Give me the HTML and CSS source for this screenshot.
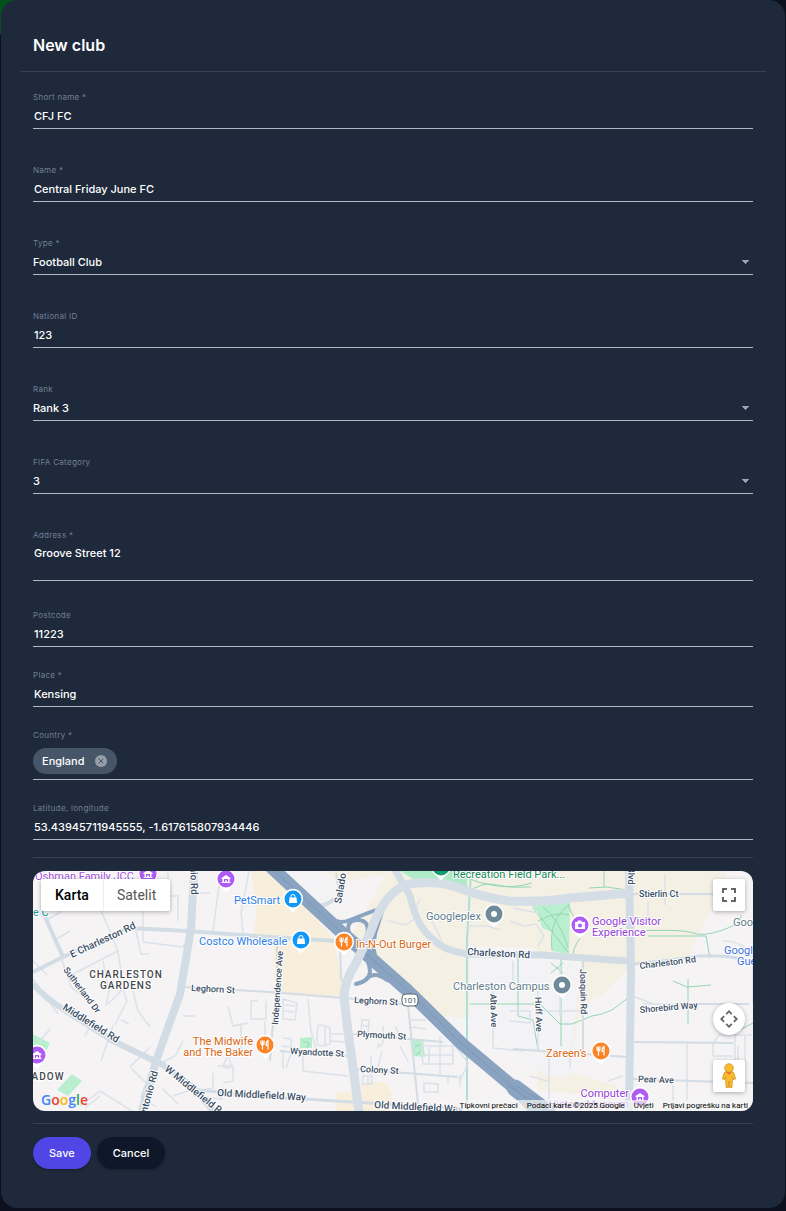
FILE: index.html
```html
<!DOCTYPE html>
<html lang="en">
<head>
  <meta charset="UTF-8" />
  <meta name="viewport" content="width=device-width, initial-scale=1.0" />
  <title>New club</title>
  <link rel="stylesheet" href="styles.css">
</head>
<body>
  <div class="backdrop-banner"></div>
  <main class="dialog">
    <header class="dialog-header">
      <h1>New club</h1>
    </header>

    <form class="club-form">
      <div class="fields">
        <div class="field">
          <label for="shortName">Short name *</label>
          <input type="text" id="shortName" value="CFJ FC">
        </div>
        <div class="field">
          <label for="name">Name *</label>
          <input type="text" id="name" value="Central Friday June FC">
        </div>
        <div class="field">
          <label for="type">Type *</label>
          <select id="type"><option>Football Club</option></select>
        </div>
        <div class="field">
          <label for="nationalId">National ID</label>
          <input type="text" id="nationalId" value="123">
        </div>
        <div class="field">
          <label for="rank">Rank</label>
          <select id="rank"><option>Rank 3</option></select>
        </div>
        <div class="field">
          <label for="category">FIFA Category</label>
          <select id="category"><option>3</option></select>
        </div>
        <div class="field">
          <label for="address">Address *</label>
          <textarea id="address">Groove Street 12</textarea>
        </div>
      </div>

      <div class="fields compact">
        <div class="field">
          <label for="postcode">Postcode</label>
          <input type="text" id="postcode" value="11223">
        </div>
        <div class="field">
          <label for="place">Place *</label>
          <input type="text" id="place" value="Kensing">
        </div>
        <div class="field">
          <label for="country">Country *</label>
          <div class="chips">
            <span class="chip">England
              <button type="button" class="chip-remove" aria-label="Remove England">
                <svg width="12" height="12" viewBox="0 0 12 12"><circle cx="6" cy="6" r="6"/><path d="M3.7 3.7l4.6 4.6M8.3 3.7L3.7 8.3"/></svg>
              </button>
            </span>
            <input type="text" id="country">
          </div>
        </div>
        <div class="field">
          <label for="latlng">Latitude, longitude</label>
          <input type="text" id="latlng" value="53.43945711945555, -1.617615807934446">
        </div>
      </div>

      <div class="map">
        <svg class="map-canvas" viewBox="0 0 720 240" preserveAspectRatio="xMidYMid slice">
          <defs>
            <g id="pin">
              <path d="M0 13.500L-5 8.500A10 10 0 1 1 5 8.500Z" fill="#fff"/>
              <circle r="8.500"/>
            </g>
            <path id="fork" d="M-4-4.500v3q0 1.500 1.500 1.500v4.500M-2.500-4.500v4M-1-4.500v3q0 1.500-1.500 1.500M3 4.500v-9q-2 1-2 5h2" fill="none" stroke="#fff" stroke-width="1.200"/>
            <g id="bag"><path d="M-3.500-1.500h7l.5 5.500h-8z" fill="#fff"/><path d="M-2-1v-1.500a2 2 0 0 1 4 0V-1" fill="none" stroke="#fff"/></g>
            <path id="museum" d="M-4.500-1L0-4l4.500 3v1h-1v3h1v1h-9v-1h1V0h-1zM-2 0v3h1V1l1 1 1-1v2h1V0z" fill="#fff" fill-rule="evenodd"/>
          </defs>

          <rect width="720" height="240" fill="#f5f3f4"/>

          <g fill="#f5f0e4">
            <path fill="#f7efdc" d="M218 0h20l34 35 28 32 12 52-2 9-68-5-2-55-20-4 4-22z"/>
            <path d="M300 0h394l-12 30-28 60-54 4-30 29-11 5-15 23-7 50 48 14v12l-80-8-2-142-66-2v72l-28-2-42-40-22-20-26-22 35-60-50 10-22-30z"/>
            <path fill="#f7efdc" d="M303 222l22-3 8-8h20l6 12-2 17h-54z"/>
            <path fill="#f3f3f5" d="M270 5h32l-10 30q8 14 20 10l-10 15-30-28z"/>
            <path fill="#f3f3f5" d="M437 86h112l-8 70-4 50h-20l-80-55z"/>
          </g>

          <g fill="#b9efcf">
            <path fill="#aeebc6" d="M367 0h67v22q-18-6-34-9l-20-5z"/>
            <path d="M498 34l39-4-1 53-17-3v-19l-10-4-4-16z"/>
            <path d="M0 163l17 9-4 8-13-5zM39 203l10 7-14 15-11-6zM267 167l12-1v11h-12zM380 169l10-1 2 18-12-1z"/>
          </g>

          <!-- footpaths and the creek -->
          <g fill="none" stroke="#93d6b4" stroke-width="1">
            <path d="M500 37l35 44M537 33q-22 16-18 46M510 36q16 12 25 40M505 50q18-10 31-6M535 34q8 20 20 24-14 14-15 25M434 22q15-12 30-8t35-2M432 6q25 12 66 10M556 17l18-1 20 3M571 0v16M600 60q50-2 60 2t30-3 18-15M615 65h58l4 22M485 85v60l15 4 5 30M437 133h70l20 20h12l20-8q10-1 20-6l16-12M528 85v90M518 92l12 10M530 92l-12 10M640 110l14 6 24-2M655 108v45M705 160l15-8M382 176q4-4 6 0t-5 8M270 170l6 2-2 5"/>
          </g>
          <path d="M438 0l-4 70v158l1 12" fill="none" stroke="#addeda" stroke-width="2"/>

          <!-- minor streets -->
          <g fill="none" stroke="#dbe2e9" stroke-width="1.500">
            <path d="M60 20l25 60 4 28M89 115l5 15-12 24M110 40v31l40 5M40 103l45-23M103 60l5 23h8M14 49l23-14M20 70l17-10M28 86l10 30 15 12M0 108l25 35M0 90l14 14M70 90l6 30-3 15M180 60l8-60M210 62l-2-20 8-42M135 0v25h10v25M165 22h12M2 40l10 6-4-12M195 135l5 20 15-3M225 130h-7v18h15v-18M232 150v30M208 152v30M190 170h30M185 195h15v15l-10 2"/>
            <path d="M67 225l-15 12M67 220l40 25M67 220l-20 15M98 197l15 15-5 14 15 10M130 218l15 15M80 155l-12 35M60 150l-8 15M17 158l-10 12M88 149l8 4M122 195l20-10 8-15M150 145h12M100 120l5 20 12 16M75 133l15-15M117 176l-20 20M140 225l15-5 5-8M195 185q-8 12-1 12t1-12M160 225l30 3M180 202v15l-18 3"/>
            <path d="M250 128l14 4-2 17-12-1zM252 134l10 1M251 140l10 1M275 128l3 32 6 20M250 167l8 1v8l-9-1M285 155q-3 20 2 20t10-2V157q-10-5-12-2M292 156v18M298 163h15M298 170l14 1M270 180v20l45 5M258 182l-5 15M250 180v18M329 149h7l-1 13h-7zM330 155h7M349 180l-5 20M338 185v20M350 155v17q-7 8-4 0M362 155l7 15M367 175l8 15M330 205h9v8h-10zM335 205v9M388 175h32v18h-30zM396 176v18M407 165v38M390 184h30M420 172l15 20-8 18M391 212l14 1v8h-14zM427 204v12M415 204v8M378 149h15M378 156l15 2"/>
            <path d="M477 50l14 5 12-2 8 12-6 10M480 37l25 5M460 120v57l30 3M477 140h20v12l-20-2M505 115v64M527 95v50M516 180v60M537 178v20M505 140h42M497 205l20 6M610 133h60M654 171v69M640 214v26M680 185v-13l6-8h34M702 162v60M712 165v30M680 185h20M705 175v40M720 132v-37M615 30v20M632 4v30M575 210l15-5M600 125l20 8M480 90v20M690 70q20 0 30 16M435 55h20l12 4M388 28q-8 8-2 20t15 24M355 50l18 4 8-6M399 50l10 20M687 195h20v15"/>
          </g>

          <!-- named streets -->
          <g fill="none" stroke="#d2dce5" stroke-linejoin="round">
            <g stroke-width="2">
              <path d="M152 116l85 5 75 6 65 7M244 66v52l-4 34-3 38M247 180l68 5M317 163l93 8M320 198l105 8M375 134l10 99M550 90v90M480 178l115 8M600 171l100 1M600 208l120 4M664 133h52M158 76l-8-1M600 23h90M307 70l1 38 6 8M303 2l4 25"/>
            </g>
            <path stroke-width="3" d="M600 93q40-4 65-8 40-2 55 8M164 219l73 7 83 5 104 6"/>
            <path stroke-width="4" d="M0 101l30-15 65-29 59 3 83 6 67 4M12 46l18 40M240 0l34 30q14 10 27-2"/>
            <path stroke-width="6" d="M0 113q12 14 30 25l50 32 50 24 30 22 20 24"/>
            <path stroke-width="7" d="M361-3l16 28q7 32 24 44 12 12 36 14l73 1 84 6"/>
            <path stroke-width="8" d="M161 0l-3 58-11 65-24 67-14 50M596 0l2 100-2 140"/>
          </g>

          <!-- freeway with its ramps -->
          <g fill="none" stroke="#8aa3c0" stroke-linecap="round">
            <path stroke-width="4" d="M290 40l11 9q6 4 16 0t34-13M351 34l-9 29q-4 18 3 27l16 16M318 66c-6-11-2-17 7-17s12 7 8 18M327 80q10 10 10 20t-14 13M334 107q8-7 20 2l10 3"/>
            <path stroke-width="13" d="M238-4l69 64 67 59 55 54 56 47 18 20"/>
            <path stroke-width="17" d="M482 217l32 24"/>
            <path stroke="#7c96b7" stroke-width="1" d="M237-4l70 64 67 59 55 54 56 47 20 20M475 215l40 24M484 215l38 24"/>
          </g>
          <path d="M326 243q-4-35-11-82l-4-35q0-15 12-34l15-32q8-24 20-36 10-11 26-12 26-3 53 9 18 6 40 9 40 1 60-3l60-5" fill="none" stroke="#d5dee7" stroke-width="9"/>

          <g class="street">
            <text transform="translate(39 87) rotate(-25)">E Charleston Rd</text>
            <text transform="translate(30 99) rotate(53)" class="small">Sutherland Dr</text>
            <text transform="translate(29 138) rotate(32)">Middlefield Rd</text>
            <text transform="translate(131 199) rotate(39)">W Middlefield Rd</text>
            <text transform="translate(114 242) rotate(-75)">ntonio Rd</text>
            <text transform="translate(157 -10) rotate(88)">onio Rd</text>
            <text transform="translate(158 120) rotate(3)" class="small">Leghorn St</text>
            <text transform="translate(245 154) rotate(-86)" class="small">Independence Ave</text>
            <text transform="translate(308 33) rotate(-80)">Salado Dr</text>
            <text transform="translate(321 132) rotate(3)" class="small">Leghorn St</text>
            <text transform="translate(324 166) rotate(3)" class="small">Plymouth St</text>
            <text transform="translate(257 183) rotate(3)" class="small">Wyandotte St</text>
            <text transform="translate(327 201) rotate(3)" class="small">Colony St</text>
            <text transform="translate(184 225) rotate(3)">Old Middlefield Way</text>
            <text transform="translate(341 237) rotate(3)">Old Middlefield Way</text>
            <text transform="translate(434 84) rotate(3)">Charleston Rd</text>
            <text transform="translate(457 123) rotate(88)" class="small">Alta Ave</text>
            <text transform="translate(502 126) rotate(88)" class="small">Huff Ave</text>
            <text transform="translate(547 98) rotate(89)" class="small">Joaquin Rd</text>
            <text transform="translate(595 -4) rotate(90)" class="small">Blvd</text>
            <text x="606" y="26" class="small">Stierlin Ct</text>
            <text transform="translate(607 98) rotate(-7)" class="small">Charleston Rd</text>
            <text transform="translate(607 142) rotate(-5)" class="small">Shorebird Way</text>
            <text transform="translate(605 211) rotate(2)" class="small">Pear Ave</text>
          </g>

          <g class="area">
            <text x="93" y="107">CHARLESTON</text>
            <text x="93" y="118">GARDENS</text>
            <text x="15" y="209">ADOW</text>
          </g>

          <g class="place">
            <text x="2" y="9" fill="#a44fe0">Oshman Family JCC</text>
            <text x="0" y="45" fill="#179a9e">e C</text>
            <text x="201" y="33" fill="#2b7de9">PetSmart</text>
            <text x="166" y="74" fill="#2b7de9">Costco Wholesale</text>
            <text x="323" y="77" fill="#d9650f">In-N-Out Burger</text>
            <text x="420" y="7" fill="#188a59">Recreation Field Park...</text>
            <text x="393" y="49" fill="#607d8b">Googleplex</text>
            <text x="420" y="119" fill="#607d8b">Charleston Campus</text>
            <text x="559" y="54" fill="#9342d8">Google Visitor</text>
            <text x="559" y="65" fill="#9342d8">Experience</text>
            <text x="700" y="55" fill="#607d8b">Googleplex</text>
            <text x="691" y="83" fill="#3c6fe0">Google</text>
            <text x="704" y="94" fill="#3c6fe0">Guest</text>
            <text x="220" y="174" text-anchor="end" fill="#d9650f">The Midwife</text>
            <text x="220" y="185" text-anchor="end" fill="#d9650f">and The Baker</text>
            <text x="513" y="186" fill="#d9650f">Zareen's</text>
            <text x="596" y="226" text-anchor="end" fill="#9342d8">Computer</text>
            <text x="596" y="237" text-anchor="end" fill="#9342d8">History Museum</text>
          </g>

          <g fill="#1198f5">
            <g transform="translate(260 28)"><use href="#pin"/><use href="#bag"/></g>
            <g transform="translate(268 69)"><use href="#pin"/><use href="#bag"/></g>
          </g>
          <g fill="#fb8427">
            <g transform="translate(311 71)"><use href="#pin"/><use href="#fork"/></g>
            <g transform="translate(232 174)"><use href="#pin"/><use href="#fork"/></g>
            <g transform="translate(568 180)"><use href="#pin"/><use href="#fork"/></g>
          </g>
          <g fill="#af5cf7">
            <g transform="translate(115 3)"><use href="#pin"/><use href="#museum"/></g>
            <g transform="translate(193 8)"><use href="#pin"/><use href="#museum"/></g>
            <g transform="translate(4 184)"><use href="#pin"/><use href="#museum"/></g>
            <g transform="translate(607 226)"><use href="#pin"/><use href="#museum"/></g>
            <g transform="translate(547 54)"><use href="#pin"/><path d="M-5-3h2l1-1.500h3L2-3h3v7H-5z" fill="#fff"/><circle cy=".5" r="2"/></g>
          </g>
          <g fill="#6f8b99">
            <g transform="translate(461 43)"><use href="#pin"/><circle r="3" fill="#fff"/></g>
            <g transform="translate(529 114)"><use href="#pin"/><circle r="3" fill="#fff"/></g>
          </g>
          <g transform="translate(408 -4)" fill="#0f9d6b"><use href="#pin"/></g>

          <g transform="translate(377 129)">
            <rect x="-8" y="-6" width="16" height="12" rx="4" fill="#fff" stroke="#5b6570"/>
            <text class="shield" y="3">101</text>
          </g>
        </svg>

        <div class="map-types">
          <button type="button" class="active">Karta</button>
          <button type="button">Satelit</button>
        </div>

        <div class="map-controls">
          <button type="button" class="map-button" aria-label="Fullscreen">
            <svg width="14" height="14" viewBox="0 0 14 14"><path d="M1 5V1h4M9 1h4v4M13 9v4H9M5 13H1V9" fill="none" stroke="#666" stroke-width="2"/></svg>
          </button>
          <button type="button" class="map-button round" aria-label="Camera controls">
            <svg width="18" height="18" viewBox="0 0 18 18"><path d="M5.500 3.500L9 0l3.500 3.500-1.300 1.300L9 2.600 6.800 4.800zM5.500 14.500L9 18l3.500-3.500-1.300-1.300L9 15.400l-2.200-2.200zM3.500 5.500L0 9l3.500 3.500 1.300-1.300L2.600 9l2.200-2.200zM14.500 5.500L18 9l-3.500 3.500-1.300-1.300L15.400 9l-2.200-2.200z" fill="#666"/></svg>
          </button>
          <button type="button" class="map-button" aria-label="Street View">
            <svg width="16" height="26" viewBox="0 0 16 26"><g fill="#fbbc2c" stroke="#c98a1a" stroke-width=".7"><path d="M4 9q4-2 8 0 1.500 1 2.500 7l-2 .5L11.500 14 11 24.500H8.500L8 18l-.5 6.500H5L4.500 14l-1 2.500-2-.5Q2.500 10 4 9z"/><circle cx="8" cy="5" r="4.300"/></g><path d="M5 9h6l-3 3z" fill="#e8752c"/></svg>
          </button>
        </div>

        <div class="google"><span class="b">G</span><span class="r">o</span><span class="y">o</span><span class="b">g</span><span class="g">l</span><span class="r">e</span></div>
        <div class="map-footer">
          <a href="#">Tipkovni prečaci</a>
          <span>Podaci karte ©2025 Google</span>
          <a href="#">Uvjeti</a>
          <a href="#">Prijavi pogrešku na karti</a>
        </div>
      </div>

      <div class="actions">
        <button type="submit" class="btn primary">Save</button>
        <button type="button" class="btn">Cancel</button>
      </div>
    </form>
  </main>
</body>
</html>
```
FILE: styles.css
```css
* {
  box-sizing: border-box;
}
body {
  font-family: Inter, sans-serif;
  font-size: 11px;
  font-weight: 500;
  background-color: #0b111e;
  color: #fff;
  margin: 0;
  padding: 0 1px 2px;
}
button, input, select, textarea {
  font: inherit;
  color: inherit;
}
button {
  border: none;
  cursor: pointer;
}
.backdrop-banner {
  position: absolute;
  top: 0;
  left: 0;
  width: 20px;
  height: 34px;
  background-color: #04501b;
}
.dialog {
  position: relative;
  background-color: #1e293b;
  border-radius: 16px;
  padding: 20px 19px 39px;
}
.dialog-header {
  padding: 12px 13px 13px;
  border-bottom: 1px solid #364154;
}
h1 {
  margin: 0;
  font-size: 16px;
  line-height: 26px;
  font-weight: 600;
}
.club-form {
  padding: 19px 13px 0;
}
.fields {
  display: flex;
  flex-direction: column;
  gap: 35px;
}
.fields.compact {
  gap: 22px;
  margin-top: 28px;
  padding-bottom: 17px;
  border-bottom: 1px solid #364154;
}
.field {
  display: flex;
  flex-direction: column;
  border-bottom: 1px solid #b3bac4;
}
.field label {
  font-size: 8px;
  font-weight: 400;
  line-height: 12px;
  letter-spacing: 0.3px;
  color: #718096;
}
.field input, .field select, .field textarea {
  width: 100%;
  height: 25px;
  padding: 0 1px;
  border: none;
  border-radius: 0;
  outline: none;
  background: none;
  line-height: 16px;
}
.field select {
  appearance: none;
  padding: 0;
  background: linear-gradient(to bottom right, #94a3b8 50%, transparent 50%) right 3px center / 4px 4px no-repeat,
    linear-gradient(to bottom left, #94a3b8 50%, transparent 50%) right 7px center / 4px 4px no-repeat;
}
.field textarea {
  display: block;
  height: 39px;
  padding-top: 4px;
  resize: none;
}
.chips {
  display: flex;
  height: 38px;
  padding: 7px 0 5px;
}
.chip {
  display: flex;
  align-items: center;
  gap: 10px;
  padding: 0 10px 0 9px;
  border-radius: 13px;
  background-color: #475569;
}
.chip-remove {
  display: flex;
  padding: 0;
  background: none;
}
.chip-remove circle {
  fill: #959da8;
}
.chip-remove path {
  stroke: #475569;
  stroke-width: 1;
}
.chips input {
  flex: 1;
  width: auto;
}

/* map */
.map {
  position: relative;
  height: 240px;
  margin-top: 13px;
  border-radius: 12px;
  overflow: hidden;
  font-family: Roboto, sans-serif;
  font-weight: 400;
}
.map-canvas {
  display: block;
  width: 100%;
  height: 100%;
}
.map-canvas text {
  paint-order: stroke;
  stroke: #fff;
  stroke-width: 2px;
  stroke-linejoin: round;
}
.street text {
  font-size: 10px;
  font-weight: 500;
  fill: #3c4f66;
}
.street .small {
  font-size: 9px;
}
.area text {
  font-size: 10px;
  font-weight: 500;
  letter-spacing: 1px;
  text-anchor: middle;
  fill: #45484d;
}
.place text {
  font-size: 11px;
}
.map-canvas .shield {
  font-size: 8px;
  text-anchor: middle;
  fill: #4a5560;
  stroke: none;
}
.map-types {
  position: absolute;
  top: 8px;
  left: 8px;
  display: flex;
  background-color: #fff;
  border-radius: 2px;
  box-shadow: 0 1px 4px rgba(0, 0, 0, 0.3);
}
.map-types button {
  height: 32px;
  padding: 0 14px;
  background: none;
  font-size: 14px;
  color: #565656;
}
.map-types .active {
  font-weight: 500;
  color: #000;
  box-shadow: 1px 0 #eee;
}
.map-controls {
  position: absolute;
  top: 8px;
  right: 8px;
  bottom: 19px;
  display: flex;
  flex-direction: column;
  gap: 25px;
}
.map-button {
  display: flex;
  align-items: center;
  justify-content: center;
  width: 32px;
  height: 32px;
  padding: 0;
  background-color: #fff;
  border-radius: 2px;
  box-shadow: 0 1px 4px rgba(0, 0, 0, 0.3);
}
.map-button.round {
  margin-top: auto;
  border-radius: 50%;
}
.google {
  position: absolute;
  left: 8px;
  bottom: 1px;
  font-family: "Open Sans", sans-serif;
  font-size: 14px;
  font-weight: 600;
  line-height: 20px;
}
.google .b { color: #4285f4; }
.google .r { color: #ea4335; }
.google .y { color: #fbbc05; }
.google .g { color: #34a853; }
.map-footer {
  position: absolute;
  right: 0;
  bottom: 0;
  display: flex;
  gap: 9px;
  padding: 0 5px;
  font-size: 8px;
  line-height: 11px;
  color: #000;
  background-color: rgba(245, 245, 245, 0.7);
}
.map-footer a {
  color: inherit;
  text-decoration: none;
}

.actions {
  display: flex;
  gap: 6px;
  margin-top: 12px;
  padding-top: 13px;
  border-top: 1px solid #364154;
}
.btn {
  height: 32px;
  padding: 0 16px;
  border-radius: 16px;
  background-color: #0f172a;
  box-shadow: 0 1px 3px rgba(0, 0, 0, 0.3);
}
.btn.primary {
  background-color: #4f46e5;
}
```
